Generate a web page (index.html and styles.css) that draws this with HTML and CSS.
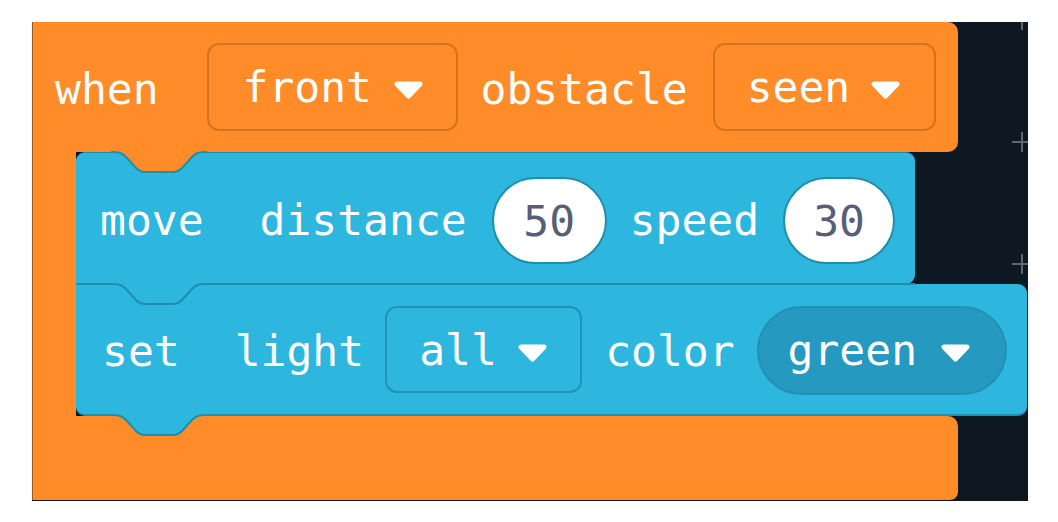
FILE: index.html
```html
<!DOCTYPE html>
<html>
<head>
<meta charset="utf-8">
<link rel="stylesheet" href="styles.css">
</head>
<body>
<div class="canvas">
  <span class="plus p1"></span>
  <span class="plus p2"></span>
  <span class="plus p3"></span>
  <div class="hat">
    <div class="hat-head">
      <span class="lbl l-when">when</span>
      <span class="dd dd-front"><span class="dd-text">front</span><svg class="arrow" width="29" height="18" viewBox="0 0 29 18"><path d="M3 3 H26 L14.5 15 Z" fill="#fff" stroke="#fff" stroke-width="5" stroke-linejoin="round"/></svg></span>
      <span class="lbl l-obst">obstacle</span>
      <span class="dd dd-seen"><span class="dd-text">seen</span><svg class="arrow" width="29" height="18" viewBox="0 0 29 18"><path d="M3 3 H26 L14.5 15 Z" fill="#fff" stroke="#fff" stroke-width="5" stroke-linejoin="round"/></svg></span>
    </div>
    <div class="hat-body">
      <div class="arm"></div>
      <div class="stack">
        <div class="block move">
          <svg class="notch-top" width="96" height="23" viewBox="0 0 96 23">
            <path d="M0 0 H96 L96 1 H94 C86 1 84 3 80 7 L71 17 C68 20 66 21 62 21 H34 C30 21 28 20 25 17 L16 7 C12 3 10 1 2 1 H0 Z" fill="#ff8b29"/>
            <path d="M0 1 H2 C10 1 12 3 16 7 L25 17 C28 20 30 21 34 21 H62 C66 21 68 20 71 17 L80 7 C84 3 86 1 94 1 H96" fill="none" stroke="#1e8eae" stroke-width="2"/>
          </svg>
          <span class="lbl l-move">move</span>
          <span class="lbl l-dist">distance</span>
          <span class="num n50">50</span>
          <span class="lbl l-speed">speed</span>
          <span class="num n30">30</span>
        </div>
        <div class="block set">
          <svg class="joint" width="839" height="24" viewBox="0 0 839 24">
            <path d="M0 1 H37 C45 1 47 3 51 7 L60 17 C63 20 65 21 69 21 H97 C101 21 103 20 106 17 L115 7 C119 3 121 1 129 1 H839" fill="none" stroke="#1e8eae" stroke-width="2"/>
          </svg>
          <svg class="tab" width="96" height="25" viewBox="0 0 96 25">
            <path d="M0 0 H96 V3 H94 C86 3 84 5 80 9 L71 19 C68 22 66 23 62 23 H34 C30 23 28 22 25 19 L16 9 C12 5 10 3 2 3 H0 Z" fill="#2db7de"/>
            <path d="M0 3 H2 C10 3 12 5 16 9 L25 19 C28 22 30 23 34 23 H62 C66 23 68 22 71 19 L80 9 C84 5 86 3 94 3 H96" fill="none" stroke="#1e8eae" stroke-width="2"/>
          </svg>
          <span class="lbl l-set">set</span>
          <span class="lbl l-light">light</span>
          <span class="dd dd-all"><span class="dd-text">all</span><svg class="arrow" width="29" height="18" viewBox="0 0 29 18"><path d="M3 3 H26 L14.5 15 Z" fill="#fff" stroke="#fff" stroke-width="5" stroke-linejoin="round"/></svg></span>
          <span class="lbl l-color">color</span>
          <span class="pill-dd"><span class="dd-text">green</span><svg class="arrow" width="29" height="18" viewBox="0 0 29 18"><path d="M3 3 H26 L14.5 15 Z" fill="#fff" stroke="#fff" stroke-width="5" stroke-linejoin="round"/></svg></span>
        </div>
      </div>
    </div>
    <div class="hat-foot"></div>
  </div>
</div>
</body>
</html>
```
FILE: styles.css
```css
* { box-sizing: border-box; }
html, body { margin: 0; padding: 0; background: #ffffff; }
body { width: 1058px; height: 522px; overflow: hidden; }

.canvas {
  position: relative;
  margin: 22px 0 0 32px;
  width: 996px;
  height: 479px;
  background: #0e1823;
  overflow: hidden;
  font-family: "DejaVu Sans Mono", "Liberation Mono", monospace;
  font-size: 43px;
  color: #ffffff;
}

.plus { position: absolute; width: 20px; height: 20px; }
.plus::before, .plus::after { content: ""; position: absolute; background: #5d6672; }
.plus::before { left: 9px; top: 0; width: 2px; height: 20px; }
.plus::after { left: 0; top: 9px; width: 20px; height: 2px; }
.p1 { left: 980px; top: -12px; }
.p2 { left: 980px; top: 110px; }
.p3 { left: 980px; top: 232px; }

.hat { display: flex; flex-direction: column; }

.hat-head {
  width: 926px;
  height: 130px;
  background: #ff8b29;
  border-radius: 0 10px 10px 0;
  box-shadow: inset 1px 0 0 #9a5a1c;
  display: flex;
  align-items: center;
  padding: 3px 0 0 23px;
}

.lbl { white-space: pre; line-height: 50px; flex: none; }
.l-obst { margin-left: 23px; }

.dd {
  display: flex;
  align-items: center;
  flex: none;
  height: 88px;
  border-radius: 12px;
  border: 2px solid #d4741f;
  padding: 0 0 0 32px;
}
.dd-text { line-height: 50px; }
.arrow { margin-left: 22px; margin-top: 6px; display: block; flex: none; }
.dd-front { margin-left: 48px; width: 251px; margin-top: -3px; padding-left: 34px; }
.dd-seen { margin-left: 25px; width: 223px; margin-top: -3px; }
.dd-seen .arrow { margin-left: 21px; }

.hat-body { display: flex; }
.arm { width: 44px; background: #ff8b29; box-shadow: inset 1px 0 0 #9a5a1c; flex: none; }
.stack { display: flex; flex-direction: column; }

.block {
  position: relative;
  height: 132px;
  background: #2db7de;
  display: flex;
  align-items: center;
}
.move {
  width: 839px;
  border-radius: 9px 9px 9px 0;
  border-top: 1px solid #1e8eae;
  padding: 3px 0 0 24px;
}
.set {
  width: 951px;
  border-radius: 0 9px 9px 9px;
  border-bottom: 2px solid #1e8eae;
  padding: 4px 0 0 26px;
}
.notch-top { position: absolute; left: 35px; top: -2px; }
.joint { position: absolute; left: 0; top: -1px; }
.tab { position: absolute; left: 35px; top: 128px; }

.l-dist { margin-left: 56px; }
.l-speed { margin-left: 23px; }
.num {
  flex: none;
  height: 87px;
  border-radius: 44px;
  background: #ffffff;
  border: 2px solid #1e8eae;
  color: #575e75;
  display: flex;
  align-items: center;
  justify-content: center;
  line-height: 50px;
  padding-top: 2px;
}
.n50 { width: 115px; margin-left: 25px; }
.n30 { width: 112px; margin-left: 24px; }

.l-light { margin-left: 55px; }
.dd-all {
  margin-left: 21px;
  width: 197px;
  height: 87px;
  border-color: #2193b4;
  margin-top: -3px;
}
.dd-all .arrow { margin-left: 21px; }
.l-color { margin-left: 23px; }
.pill-dd {
  flex: none;
  margin-left: 22px;
  width: 250px;
  height: 89px;
  border-radius: 45px;
  background: #2599bf;
  border: 2px solid #2290b3;
  display: flex;
  align-items: center;
  padding-left: 29px;
  margin-top: -2px;
}
.pill-dd .arrow { margin-left: 24px; }

.hat-foot {
  width: 926px;
  height: 84px;
  background: #ff8b29;
  border-radius: 0 10px 8px 0;
  box-shadow: inset 1px 0 0 #9a5a1c;
}
```
